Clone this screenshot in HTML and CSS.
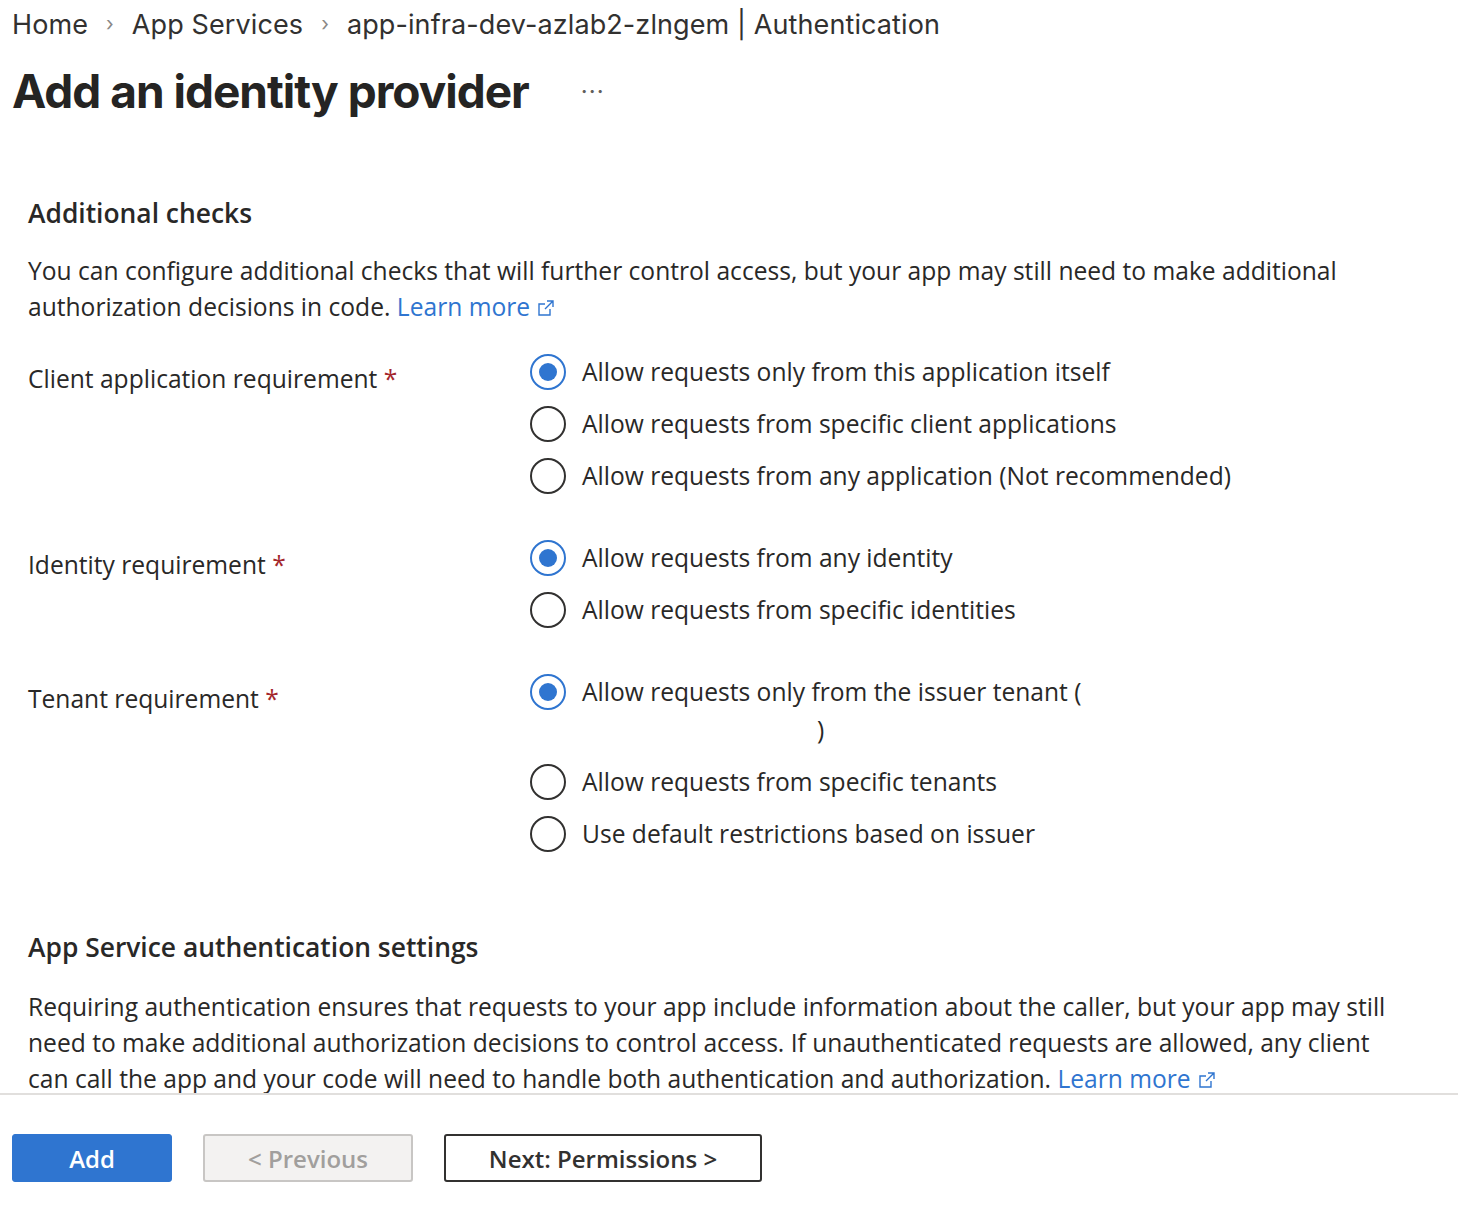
FILE: index.html
```html
<!DOCTYPE html>
<html lang="en">

<head>
  <meta charset="UTF-8">
  <meta name="viewport" content="width=device-width, initial-scale=1.0">
  <title>Add an identity provider</title>
  <link rel="stylesheet" href="styles.css">
</head>

<body>
  <div class="page">
    <div class="top">
      <nav class="crumbs">
        <a href="#">Home</a>
        <span class="sep">&#8250;</span>
        <a href="#">App Services</a>
        <span class="sep">&#8250;</span>
        <a href="#">app-infra-dev-azlab2-zlngem | Authentication</a>
      </nav>
      <div class="title-row">
        <h1>Add an identity provider</h1>
        <span class="more">&middot;&middot;&middot;</span>
      </div>
    </div>

    <div class="content">
      <h2>Additional checks</h2>
      <p class="desc">You can configure additional checks that will further control access, but your app may still need to make additional authorization decisions in code. <a class="ext" href="#">Learn more <svg width="20" height="20" viewBox="0 0 20 20"><path d="M11 3h6v6M17 3l-8 8M14 11v6H3V6h6" fill="none" stroke="currentColor" stroke-width="1.4"/></svg></a></p>

      <div class="field">
        <div class="label">Client application requirement <span class="req">*</span></div>
        <div class="options">
          <label class="radio"><span class="dot on"></span><span>Allow requests only from this application itself</span></label>
          <label class="radio"><span class="dot"></span><span>Allow requests from specific client applications</span></label>
          <label class="radio"><span class="dot"></span><span>Allow requests from any application (Not recommended)</span></label>
        </div>
      </div>

      <div class="field">
        <div class="label">Identity requirement <span class="req">*</span></div>
        <div class="options">
          <label class="radio"><span class="dot on"></span><span>Allow requests from any identity</span></label>
          <label class="radio"><span class="dot"></span><span>Allow requests from specific identities</span></label>
        </div>
      </div>

      <div class="field">
        <div class="label">Tenant requirement <span class="req">*</span></div>
        <div class="options">
          <label class="radio"><span class="dot on"></span><span class="wrap">Allow requests only from the issuer tenant (<span class="hidden-id"></span>)</span></label>
          <label class="radio"><span class="dot"></span><span>Allow requests from specific tenants</span></label>
          <label class="radio"><span class="dot"></span><span>Use default restrictions based on issuer</span></label>
        </div>
      </div>

      <h2 class="second">App Service authentication settings</h2>
      <p class="desc">Requiring authentication ensures that requests to your app include information about the caller, but your app may still need to make additional authorization decisions to control access. If unauthenticated requests are allowed, any client can call the app and your code will need to handle both authentication and authorization. <a class="ext" href="#">Learn more <svg width="20" height="20" viewBox="0 0 20 20"><path d="M11 3h6v6M17 3l-8 8M14 11v6H3V6h6" fill="none" stroke="currentColor" stroke-width="1.4"/></svg></a></p>
    </div>

    <div class="footer">
      <button class="btn primary">Add</button>
      <button class="btn disabled">&lt; Previous</button>
      <button class="btn outline">Next: Permissions &gt;</button>
    </div>
  </div>
</body>
</html>
```

FILE: styles.css
```css
body {
  margin: 0;
  background-color: white;
  color: #292827;
  font-family: "Open Sans", "Noto Sans", sans-serif;
}
a {
  text-decoration: none;
}
.page {
  display: flex;
  flex-direction: column;
}
.top {
  height: 134px;
  padding: 0 12px;
  font-family: Inter, sans-serif;
}
.crumbs {
  display: flex;
  align-items: center;
  gap: 18px;
  height: 48px;
  font-size: 27px;
  letter-spacing: 0.1px;
}
.crumbs a {
  color: #323130;
}
.crumbs .sep {
  color: #8a8886;
  font-size: 20px;
}
.title-row {
  display: flex;
  align-items: center;
  gap: 52px;
  height: 86px;
}
h1 {
  margin: 0;
  font-size: 46px;
  font-weight: 700;
  letter-spacing: -1px;
  color: #252423;
}
.more {
  color: #605e5c;
  font-size: 24px;
  letter-spacing: 1px;
}
.content {
  height: 900px;
  overflow: hidden;
  padding: 59px 28px 0;
  font-size: 24.6px;
}
h2 {
  margin: 0;
  font-size: 26.4px;
  font-weight: 600;
  line-height: 40px;
}
h2.second {
  margin-top: 74px;
}
.desc {
  margin: 20px 0 0;
  line-height: 36px;
  max-width: 1370px;
}
.second + .desc {
  margin-top: 22px;
}
.ext {
  color: #2f75d0;
}
.ext svg {
  vertical-align: -2px;
}
.field {
  display: flex;
  margin-top: 44px;
}
.desc + .field {
  margin-top: 28px;
}
.label {
  width: 502px;
  padding-top: 7px;
  line-height: 38px;
}
.req {
  color: #a4262c;
}
.options {
  display: flex;
  flex-direction: column;
  gap: 14px;
}
.radio {
  display: flex;
  align-items: flex-start;
  gap: 16px;
  line-height: 38px;
}
.dot {
  flex: none;
  width: 32px;
  height: 32px;
  margin-top: 1px;
  border: 2px solid #323130;
  border-radius: 50%;
  display: flex;
  align-items: center;
  justify-content: center;
}
.dot.on {
  border-color: #2f75d0;
}
.dot.on::after {
  content: "";
  width: 18px;
  height: 18px;
  border-radius: 50%;
  background-color: #2f75d0;
}
.wrap {
  width: 520px;
}
.hidden-id {
  display: inline-block;
  width: 235px;
  height: 1px;
}
.footer {
  border-top: 2px solid #e1dfdd;
  height: 112px;
  display: flex;
  align-items: flex-start;
  gap: 31px;
  padding: 39px 12px 0;
}
.btn {
  height: 48px;
  font-family: "Open Sans", sans-serif;
  font-size: 24px;
  font-weight: 600;
  border-radius: 3px;
  cursor: pointer;
}
.primary {
  width: 160px;
  background-color: #2f75d0;
  border: 1px solid #2f75d0;
  color: white;
}
.disabled {
  width: 210px;
  background-color: #f3f2f1;
  border: 2px solid #c8c6c4;
  color: #a19f9d;
}
.outline {
  width: 318px;
  background-color: white;
  border: 2px solid #323130;
  color: #323130;
}
```
